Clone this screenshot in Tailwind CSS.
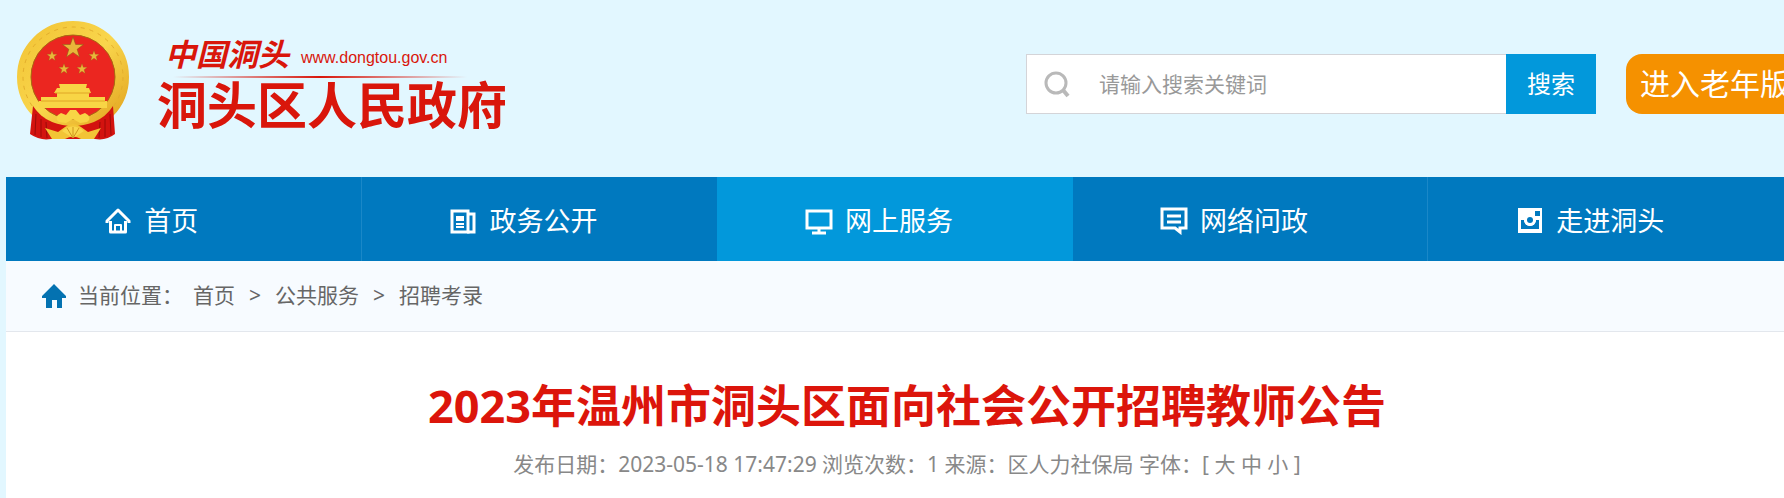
<!DOCTYPE html>
<html lang="zh-CN">
<head>
    <meta charset="UTF-8">
    <meta name="viewport" content="width=device-width, initial-scale=1.0">
    <title>2023年温州市洞头区面向社会公开招聘教师公告</title>
    <script src="https://cdn.jsdelivr.net/npm/@tailwindcss/browser@4"></script>
</head>
<body class="min-h-screen flex flex-col overflow-x-hidden bg-[#e2f7ff] font-['Noto_Sans','Noto_Sans_CJK_SC',sans-serif]">

    <header class="flex items-start pl-4 pb-9 overflow-hidden">
        <a href="#" class="flex items-start mt-5 text-[#d9160b]">
            <svg class="w-[114px] h-[121px] shrink-0" viewBox="0 0 114 121" aria-hidden="true">
                <defs>
                    <linearGradient id="gold" x1="0" y1="0" x2="1" y2="1">
                        <stop offset="0" stop-color="#f2c436"/>
                        <stop offset=".5" stop-color="#f9d64c"/>
                        <stop offset="1" stop-color="#e2a41f"/>
                    </linearGradient>
                    <path id="star" d="M0-10 2.4-3.2 9.5-3.1 3.8 1.2 5.9 8.1 0 4 -5.9 8.1 -3.8 1.2 -9.5-3.1 -2.4-3.2Z"/>
                </defs>
                <circle cx="57" cy="57" r="49" fill="#eb2620" stroke="url(#gold)" stroke-width="14"/>
                <circle cx="57" cy="57" r="42" fill="#eb2620" stroke="#a86a12"/>
                <circle cx="57" cy="57" r="50" fill="none" stroke="#e3ae2c" stroke-width="1" stroke-dasharray="4 5"/>
                <g fill="#e9b63a" stroke="#8c5a14" stroke-width=".5">
                    <use href="#star" transform="translate(57 28) scale(1.1)"/>
                    <use href="#star" transform="translate(36 36) scale(.55)"/>
                    <use href="#star" transform="translate(78 36) scale(.55)"/>
                    <use href="#star" transform="translate(48 49) scale(.55)"/>
                    <use href="#star" transform="translate(66 49) scale(.55)"/>
                </g>
                <path d="M43 64H71L70 68H73L75 73H73V77H89V81H91V88H23V81H25V77H41V73H38L41 68H44Z" fill="#f8d545"/>
                <path d="M39 73H74M25 81H89" stroke="#e0a626"/>
                <path d="M17 86Q24 97 36 102Q57 110 78 102Q90 97 97 86L99 114Q90 121 79 119H35Q24 121 14 114Z" fill="#d3130f"/>
                <path d="M20 94 19 115M25 99 25 117M30 102 31 118M94 94 95 115M89 99 89 117M84 102 83 118" stroke="#9c0b09" stroke-width="1"/>
                <path d="M43 102Q37 97 45 93L50 95 54 90 60 90 64 95 69 93Q77 97 71 102L64 103 57 99 50 103Z" fill="#f8d545"/>
                <path d="M29 108 42 112 49 107Q57 101 65 107L72 112 85 108 78 119H65Q57 114 49 119H36Z" fill="#f2c436"/>
                <path d="M57 118 46 111Q57 102 68 111Z" fill="#f9d64c"/>
                <path d="M57 118V107M57 118 51 108M57 118 63 108" stroke="#cf961c" stroke-width="1"/>
            </svg>
            <div class="ml-[27px] mt-3">
                <div class="flex items-center gap-3 pl-2 h-11">
                    <span class="font-bold italic text-[31px] leading-none">中国洞头</span>
                    <span class="pt-2 font-['Liberation_Sans',sans-serif] text-base leading-none">www.dongtou.gov.cn</span>
                </div>
                <div class="ml-4 mr-10 h-[2px] bg-linear-to-r from-transparent via-[#d9160b] to-transparent"></div>
                <div class="font-bold text-[50px] leading-[54px] whitespace-nowrap">洞头区人民政府</div>
            </div>
        </a>

        <form class="flex shrink-0 ml-auto mt-[54px] h-15 w-[570px]" onsubmit="return false">
            <label for="keyword" class="flex flex-1 items-center gap-7 pl-4 bg-white border border-r-0 border-[#d4d4d8]">
                <svg class="size-7 shrink-0 text-[#b9b9b9]" viewBox="0 0 28 28" fill="none" stroke="currentColor" stroke-width="3" aria-hidden="true">
                    <circle cx="13" cy="13" r="10"/>
                    <path d="M20 20 25 26" stroke-width="4"/>
                </svg>
                <input id="keyword" type="text" placeholder="请输入搜索关键词" class="flex-1 min-w-0 h-full text-[21px] text-gray-700 placeholder:text-[#999999] outline-none">
            </label>
            <button type="submit" class="w-[90px] bg-[#0298db] text-white text-2xl">搜索</button>
        </form>
        <button type="button" class="shrink-0 ml-[30px] -mr-5 mt-[54px] h-15 px-[14px] rounded-2xl bg-[#f59100] text-white text-[30px] leading-none whitespace-nowrap">进入老年版</button>
    </header>

    <nav class="ml-[6px] grid grid-cols-5 h-21 bg-[#0079bf] text-white text-[27px]">
        <a href="#" class="flex items-center justify-center gap-3 pt-1 pr-16 border-r border-[#1a88c8]">
            <svg class="size-7" viewBox="0 0 28 28" fill="none" stroke="currentColor" stroke-width="3" stroke-linejoin="round" aria-hidden="true">
                <path d="M3 16V14L14 3 25 14V16M6.500 14V25H21.500V14"/>
                <path d="M11 26V18H17V26" stroke-width="2"/>
            </svg>
            首页
        </a>
        <a href="#" class="flex items-center justify-center gap-3 pt-1 pr-8">
            <svg class="size-7" viewBox="0 0 28 28" fill="none" stroke="currentColor" stroke-width="3" aria-hidden="true">
                <path d="M3 4H19V25H3Z"/>
                <path d="M19 7H25V25H18"/>
                <path d="M7 9H15V14H7Z" fill="currentColor" stroke="none"/>
                <path d="M7 17H15M7 20H15" stroke-width="2"/>
            </svg>
            政务公开
        </a>
        <a href="#" class="flex items-center justify-center gap-3 pt-1 pr-8 bg-[#0298db]">
            <svg class="size-7" viewBox="0 0 28 28" fill="none" stroke="currentColor" stroke-width="3" aria-hidden="true">
                <path d="M2 4H26V21H2Z"/>
                <path d="M14 21V25M7 26H21"/>
            </svg>
            网上服务
        </a>
        <a href="#" class="flex items-center justify-center gap-3 pt-1 pr-8 border-r border-[#1a88c8]">
            <svg class="size-7" viewBox="0 0 28 28" fill="none" stroke="currentColor" stroke-width="3" aria-hidden="true">
                <path d="M2 2H26V21H20V25L15 21H2Z"/>
                <path d="M7 9H21M7 15H21"/>
            </svg>
            网络问政
        </a>
        <a href="#" class="flex items-center justify-center gap-3 pt-1 pr-8">
            <svg class="size-7" viewBox="0 0 28 28" fill="currentColor" aria-hidden="true">
                <path fill-rule="evenodd" d="M2 1H26V26H2ZM19 4V9H24V4ZM5 13V22H23V13H20A6 6 0 0 1 8 13Z"/>
                <circle cx="14" cy="13" r="6"/>
                <circle cx="14" cy="13" r="3" fill="#0079bf"/>
            </svg>
            走进洞头
        </a>
    </nav>

    <main class="ml-[6px] flex-1 bg-white">
        <div class="flex items-center h-[71px] pl-9 bg-[#f7fbff] border-b border-[#e3e7ed] text-[21px] text-[#666666]">
            <svg class="size-6 mr-3 text-[#0472b1]" viewBox="0 0 24 24" fill="currentColor" aria-hidden="true">
                <path d="M12 0 24 12V14H20V24H15V16H10V24H4V14H0V12Z"/>
            </svg>
            <span>当前位置：</span>
            <div class="flex gap-[14px] ml-[10px]">
                <a href="#">首页</a>
                <span>&gt;</span>
                <a href="#">公共服务</a>
                <span>&gt;</span>
                <a href="#">招聘考录</a>
            </div>
        </div>

        <article class="pl-6 pt-11 text-center">
            <h1 class="text-[45px] leading-[60px] font-bold text-[#dc150b]">2023年温州市洞头区面向社会公开招聘教师公告</h1>
            <p class="mt-3 text-[21px] leading-8 text-[#888888]">
                发布日期：2023-05-18 17:47:29 浏览次数：1 来源：区人力社保局 字体：[
                <button type="button">大</button>
                <button type="button">中</button>
                <button type="button">小</button>
                ]
            </p>
        </article>
    </main>

</body>
</html>
